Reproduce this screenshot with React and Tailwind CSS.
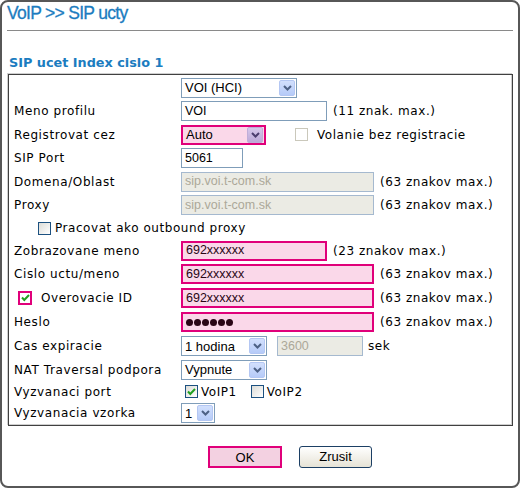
import React from 'react';

const dv = "font-['DejaVu_Sans',sans-serif]";
const ar = "font-['Liberation_Sans',Arial,sans-serif]";

const Chevron = ({ color }) => (
  <svg width="9" height="6" viewBox="0 0 9 6">
    <path d="M1 1 L4.5 4.5 L8 1" fill="none" stroke={color} strokeWidth="2" />
  </svg>
);

const Arrow = ({ pink }) =>
  pink ? (
    <div className="w-[16px] h-[16px] rounded-[2px] border border-[#bfaed8] bg-gradient-to-b from-[#d6c8ea] to-[#bca9d8] flex items-center justify-center">
      <Chevron color="#4b3d6e" />
    </div>
  ) : (
    <div className="w-[16px] h-[16px] rounded-[2px] border border-[#b4c7f3] bg-gradient-to-b from-[#d2e0fd] to-[#b6cbf8] flex items-center justify-center">
      <Chevron color="#4d6185" />
    </div>
  );

const Select = ({ w, value, pink }) => (
  <div
    className={`${w} h-[20px] flex items-center justify-between ${
      pink ? 'border-2 border-[#e0007a] bg-[#fad8e9] pr-[1px]' : 'border border-[#7f9db9] bg-white pr-[1px]'
    }`}
  >
    <span className={`${ar} text-[13px] leading-none pl-[3px] text-black`}>{value}</span>
    <Arrow pink={pink} />
  </div>
);

const Input = ({ w, value, pink, disabled, password }) => {
  let cls = 'border border-[#7f9db9] bg-white text-black';
  if (pink) cls = 'border-2 border-[#e0007a] bg-[#fad8e9] text-[#2a0616]';
  if (disabled) cls = 'border border-[#a5b9cf] bg-[#ebebe4] text-[#aca899]';
  return (
    <div className={`${w} h-[20px] flex items-center px-[3px] ${cls}`}>
      {password ? (
        <div className="flex gap-[1px]">
          {[0, 1, 2, 3, 4, 5].map((i) => (
            <div key={i} className="w-[7px] h-[7px] rounded-full bg-[#2a0616]" />
          ))}
        </div>
      ) : (
        <span className={`${ar} text-[12.5px] leading-none`}>{value}</span>
      )}
    </div>
  );
};

const Check = ({ checked, disabled, pink }) => (
  <div
    className={`flex items-center justify-center ${
      pink
        ? 'w-[14px] h-[14px] border-2 border-[#e0007a] bg-white'
        : disabled
        ? 'w-[13px] h-[13px] border border-[#cac8bb] bg-white'
        : 'w-[13px] h-[13px] border border-[#1c5180] bg-gradient-to-br from-[#dcdcd7] to-white'
    }`}
  >
    {checked && (
      <svg width="9" height="8" viewBox="0 0 9 8">
        <path d="M1 3.5 L3.3 6 L8 1" fill="none" stroke="#21a121" strokeWidth="2" />
      </svg>
    )}
  </div>
);

const Note = ({ children, cls = '' }) => (
  <span className={`${dv} text-[12px] tracking-[0.55px] text-black ${cls}`}>{children}</span>
);

const Row = ({ h, label, children }) => (
  <div className={`flex items-center ${h}`}>
    <div className={`w-[172px] pl-[5px] ${dv} text-[12px] tracking-[0.6px] text-black`}>{label}</div>
    <div className="flex items-center">{children}</div>
  </div>
);

export default function App() {
  return (
    <div className="w-[520px] h-[488px] bg-white border-2 border-[#575757] rounded-[8px] overflow-hidden">
      <div className={`h-[28px] pl-[5px] ${ar} text-[17.5px] leading-[23px] tracking-[-0.7px] text-[#1b7cc0] [-webkit-text-stroke:0.3px_#1b7cc0]`}>
        VoIP &gt;&gt; SIP ucty
      </div>
      <div className="mx-[5px] border-t border-[#8a8a8a]" />
      <div className={`h-[43px] pt-[24px] pl-[7px] ${dv} font-bold text-[12.8px] leading-[16px] text-[#1b7cc0]`}>
        SIP ucet Index cislo 1
      </div>
      <div className="ml-[6px] w-[505px] h-[352px] border border-[#404040] shadow-[-1px_-1px_0_#cfcfcf,inset_-1px_-1px_0_#cfcfcf] pt-[1px]">
        <Row h="h-[23px]" label="">
          <Select w="w-[116px]" value="VOI (HCI)" />
        </Row>
        <Row h="h-[24px]" label="Meno profilu">
          <Input w="w-[146px]" value="VOI" />
          <Note cls="ml-[6px]">(11 znak. max.)</Note>
        </Row>
        <Row h="h-[23px]" label="Registrovat cez">
          <Select w="w-[85px]" value="Auto" pink />
          <div className="ml-[29px]">
            <Check disabled />
          </div>
          <Note cls="ml-[9px]">Volanie bez registracie</Note>
        </Row>
        <Row h="h-[24px]" label="SIP Port">
          <Input w="w-[62px]" value="5061" />
        </Row>
        <Row h="h-[23px]" label="Domena/Oblast">
          <Input w="w-[193px]" value="sip.voi.t-com.sk" disabled />
          <Note cls="ml-[6px]">(63 znakov max.)</Note>
        </Row>
        <Row h="h-[24px]" label="Proxy">
          <Input w="w-[193px]" value="sip.voi.t-com.sk" disabled />
          <Note cls="ml-[6px]">(63 znakov max.)</Note>
        </Row>
        <div className="flex items-center h-[22px] pl-[29px]">
          <Check />
          <Note cls="ml-[4px]">Pracovat ako outbound proxy</Note>
        </div>
        <Row h="h-[23px]" label="Zobrazovane meno">
          <Input w="w-[146px]" value="692xxxxxx" pink />
          <Note cls="ml-[6px]">(23 znakov max.)</Note>
        </Row>
        <Row h="h-[24px]" label="Cislo uctu/meno">
          <Input w="w-[193px]" value="692xxxxxx" pink />
          <Note cls="ml-[6px]">(63 znakov max.)</Note>
        </Row>
        <div className="flex items-center h-[24px]">
          <div className="w-[172px] pl-[9px] flex items-center">
            <Check checked pink />
            <Note cls="ml-[9px] tracking-[0.6px]">Overovacie ID</Note>
          </div>
          <Input w="w-[193px]" value="692xxxxxx" pink />
          <Note cls="ml-[6px]">(63 znakov max.)</Note>
        </div>
        <Row h="h-[24px]" label="Heslo">
          <Input w="w-[193px]" password pink />
          <Note cls="ml-[6px]">(63 znakov max.)</Note>
        </Row>
        <Row h="h-[24px]" label="Cas expiracie">
          <Select w="w-[86px]" value="1 hodina" />
          <div className="ml-[10px]">
            <Input w="w-[86px]" value="3600" disabled />
          </div>
          <Note cls="ml-[5px]">sek</Note>
        </Row>
        <Row h="h-[23px]" label="NAT Traversal podpora">
          <Select w="w-[86px]" value="Vypnute" />
        </Row>
        <Row h="h-[21px]" label="Vyzvanaci port">
          <div className="ml-[4px]">
            <Check checked />
          </div>
          <Note cls="ml-[3px]">VoIP1</Note>
          <div className="ml-[14px]">
            <Check />
          </div>
          <Note cls="ml-[3px]">VoIP2</Note>
        </Row>
        <Row h="h-[22px]" label="Vyzvanacia vzorka">
          <Select w="w-[34px]" value="1" />
        </Row>
      </div>
      <div className="flex pt-[20px] pl-[206px] gap-[17px]">
        <button className={`w-[74px] h-[22px] border-2 border-[#e0007a] bg-[#f3d1e1] ${ar} font-normal text-[13px] text-black`}>
          OK
        </button>
        <button className={`w-[73px] h-[22px] border border-[#1c3f64] rounded-[3px] bg-gradient-to-b from-white to-[#e6e3d6] ${ar} font-normal text-[13px] text-black`}>
          Zrusit
        </button>
      </div>
    </div>
  );
}
